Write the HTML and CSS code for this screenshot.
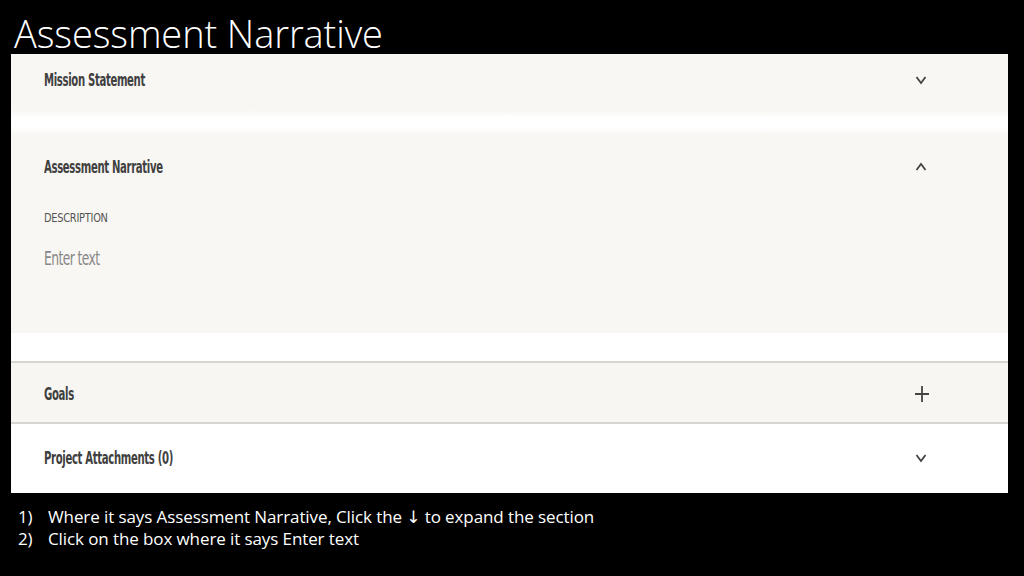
FILE: index.html
```html
<!DOCTYPE html>
<html>
<head>
<meta charset="utf-8">
<link rel="stylesheet" href="styles.css">
</head>
<body>
<h1 class="title">Assessment Narrative</h1>
<div class="panel">
  <div class="row row-mission">
    <span class="label">Mission Statement</span>
    <svg class="icon" width="12" height="10" viewBox="0 0 12 10"><path d="M1.5 2 L6 8 L10.5 2" fill="none" stroke="#444" stroke-width="1.8"/></svg>
  </div>
  <div class="gap"></div>
  <div class="section">
    <div class="row row-head">
      <span class="label">Assessment Narrative</span>
      <svg class="icon" width="12" height="10" viewBox="0 0 12 10"><path d="M1.5 8 L6 2 L10.5 8" fill="none" stroke="#444" stroke-width="1.8"/></svg>
    </div>
    <div class="desc">DESCRIPTION</div>
    <div class="placeholder">Enter text</div>
  </div>
  <div class="gap2"></div>
  <div class="row row-goals">
    <span class="label">Goals</span>
    <svg class="icon" width="16" height="16" viewBox="0 0 16 16"><path d="M8 0 V16 M1 8 H15" fill="none" stroke="#444" stroke-width="1.8"/></svg>
  </div>
  <div class="row row-attach">
    <span class="label">Project Attachments (0)</span>
    <svg class="icon" width="12" height="10" viewBox="0 0 12 10"><path d="M1.5 2 L6 8 L10.5 2" fill="none" stroke="#444" stroke-width="1.8"/></svg>
  </div>
</div>
<ol class="steps">
  <li><span class="num">1)</span><span>Where it says Assessment Narrative, Click the <span class="arrow">↓</span> to expand the section</span></li>
  <li><span class="num">2)</span><span>Click on the box where it says Enter text</span></li>
</ol>
</body>
</html>
```
FILE: styles.css
```css
html, body {
  margin: 0;
  padding: 0;
  background: #000;
  width: 1024px;
  height: 576px;
  overflow: hidden;
}
.title {
  margin: 0;
  padding: 12px 0 0 14px;
  height: 54px;
  box-sizing: border-box;
  font-family: "Open Sans", sans-serif;
  font-weight: 300;
  font-size: 38px;
  line-height: 42px;
  color: #fff;
  letter-spacing: -0.1px;
  white-space: nowrap;
}
.panel {
  margin-left: 11px;
  width: 997px;
  height: 439px;
  background: #fff;
  display: flex;
  flex-direction: column;
  font-family: "DejaVu Sans Condensed", "DejaVu Sans", sans-serif;
}
.row {
  display: flex;
  align-items: center;
  justify-content: space-between;
  padding: 0 81px 0 33px;
}
.label {
  font-size: 17px;
  font-weight: bold;
  color: #404040;
  letter-spacing: -0.5px;
  transform: scaleX(0.66);
  transform-origin: left center;
  white-space: nowrap;
}
.icon { display: block; }
.row-mission {
  height: 56px;
  background: #f8f7f3;
  padding-bottom: 4px;
  box-sizing: border-box;
}
.gap {
  height: 25px;
  background: linear-gradient(#f8f7f3, #fff 30%, #fff 70%, #f8f7f3);
}
.section {
  height: 198px;
  background: #f8f7f3;
  box-sizing: border-box;
  padding-top: 20px;
}
.row-head {
  height: 23px;
}
.desc {
  margin: 32px 0 0 33px;
  font-size: 13px;
  color: #555;
  letter-spacing: -0.3px;
  transform: scaleX(0.84);
  transform-origin: left center;
}
.placeholder {
  margin: 22px 0 0 33px;
  font-size: 19px;
  color: #888;
  letter-spacing: -0.8px;
  transform: scaleX(0.72);
  transform-origin: left center;
}
.gap2 {
  height: 28px;
  background: #fff;
  border-bottom: 2px solid #d6d5d1;
}
.row-goals {
  height: 61px;
  background: #f7f6f2;
  border-bottom: 2px solid #d6d5d1;
  padding-right: 78px;
  padding-top: 3px;
  box-sizing: border-box;
}
.row-attach {
  flex: 1;
  background: #fff;
  padding-bottom: 2px;
}
.steps {
  list-style: none;
  margin: 13px 0 0 0;
  padding: 0 0 0 18px;
  font-family: "Open Sans", sans-serif;
  font-size: 17px;
  line-height: 22px;
  color: #fff;
  letter-spacing: -0.1px;
}
.steps li { display: flex; }
.num { width: 30px; }
.arrow { font-family: "DejaVu Sans", sans-serif; }
```
